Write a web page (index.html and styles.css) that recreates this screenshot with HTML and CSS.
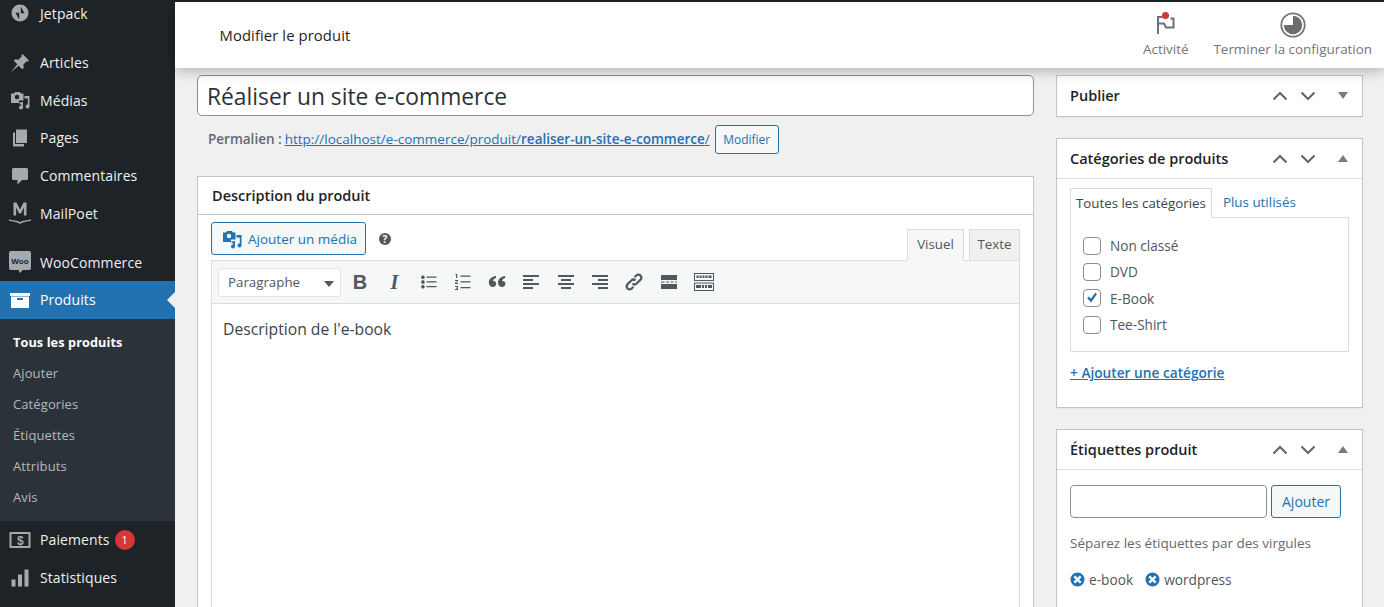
FILE: index.html
```html
<!DOCTYPE html>
<html lang="fr">
<head>
<meta charset="utf-8">
<title>Modifier le produit</title>
<link rel="stylesheet" href="styles.css">
</head>
<body>
<div class="app">
<aside class="sidebar">
  <nav class="menu first-group">
    <a class="item item-first"><svg class="ic" viewBox="0 0 20 20"><path fill-rule="evenodd" d="M10 1.500a8.500 8.500 0 1 0 0 17 8.500 8.500 0 0 0 0-17zM10.800 3.500v6.800h3.700zM9.200 16.500V9.700H5.500z"/></svg><span>Jetpack</span></a>
  </nav>
  <nav class="menu">
    <a class="item"><svg class="ic" viewBox="0 0 20 20"><path d="M12.500 1L19 7.500 17.700 8.700 16.700 8.200 13.300 11.400 13.800 14.800 12.300 16.200 8.700 12.700.8 19.200 7.300 11.300 3.800 7.700 5.200 6.200 8.600 6.800 11.800 3.300 11.300 2.300z"/></svg><span>Articles</span></a>
    <a class="item"><svg class="ic" viewBox="0 0 20 20"><path fill-rule="evenodd" d="M1 3.500h3L5 2h5l1 1.500h2.500v7H9V13H1zM7 4.800a2.200 2.200 0 1 0 0 4.400 2.200 2.200 0 0 0 0-4.400z"/><path d="M14.500 6h5v10.500a2 2 0 1 1-1.700-2V8.500h-3.300zM9.500 12.500l3.500-.5v5.500a2 2 0 1 1-1.700-2v-1.200H9.500z"/></svg><span>Médias</span></a>
    <a class="item"><svg class="ic" viewBox="0 0 20 20"><path d="M6 1.500h11v13.500H6z"/><path d="M3 4.500h2V16h9v2.500H3z"/></svg><span>Pages</span></a>
    <a class="item"><svg class="ic" viewBox="0 0 20 20"><path d="M3.500 2h13a1.500 1.500 0 0 1 1.500 1.500v9a1.500 1.500 0 0 1-1.500 1.500H12l-4.500 4.500V14H3.500A1.500 1.500 0 0 1 2 12.500v-9A1.500 1.500 0 0 1 3.500 2z"/></svg><span>Commentaires</span></a>
    <a class="item"><svg class="ic ic-mp" viewBox="0 0 22 24"><path d="M4.500 1.500h3l3.500 7 3.500-7h3v13h-2.600V6.500l-3 6h-1.800l-3-6v8H4.500z"/><path d="M0 18.500c4 .8 7.500 1 9.500 1.800l1.500 1 1.500-1c2-.8 5.500-1 9.500-1.800v1.300c-3.500 1-7 1.200-9 2l-2 1.200-2-1.200c-2-.8-5.500-1-9-2z"/></svg><span>MailPoet</span></a>
  </nav>
  <nav class="menu group-woo">
    <a class="item item-woo"><svg class="ic ic-woo" viewBox="0 0 22 24"><path d="M2 1h18a2 2 0 0 1 2 2v15a2 2 0 0 1-2 2h-6l-3.500 3-.8-3H2a2 2 0 0 1-2-2V3a2 2 0 0 1 2-2z"/><text x="11" y="14" class="woo-t">Woo</text></svg><span>WooCommerce</span></a>
    <a class="item current"><svg class="ic" viewBox="0 0 20 20"><path fill-rule="evenodd" d="M0 3h20v3H0zM1 6.500h18V18H1zM7 8v2h6V8z"/></svg><span>Produits</span></a>
    <div class="submenu">
      <a class="sub active">Tous les produits</a>
      <a class="sub">Ajouter</a>
      <a class="sub">Catégories</a>
      <a class="sub">Étiquettes</a>
      <a class="sub">Attributs</a>
      <a class="sub">Avis</a>
    </div>
    <a class="item"><svg class="ic ic-pay" viewBox="0 0 22 18"><path fill-rule="evenodd" d="M1.500 1h19a1 1 0 0 1 1 1v14a1 1 0 0 1-1 1h-19a1 1 0 0 1-1-1V2a1 1 0 0 1 1-1zM2.500 3v12h17V3z"/><text x="11.500" y="13.500" class="pay-t">$</text></svg><span>Paiements</span><b class="count">1</b></a>
    <a class="item"><svg class="ic" viewBox="0 0 20 20"><path d="M1.500 11.500h4v7h-4zM8 6.500h4v12H8zM14.500 1.500h4v17h-4z"/></svg><span>Statistiques</span></a>
  </nav>
</aside>

<div class="main">
  <div class="topstrip"></div>
  <header class="topbar">
    <h1 class="page-title">Modifier le produit</h1>
    <div class="top-actions">
      <div class="top-action">
        <span class="flag"><svg viewBox="0 0 20 26" width="20" height="26"><path class="flag-p" d="M2 22V5H6.500M2 11.500h6l2 4h7.500V6.500h-3"/></svg><i class="flag-dot"></i></span>
        <span class="top-label">Activité</span>
      </div>
      <div class="top-action">
        <svg viewBox="0 0 26 26" width="26" height="26"><circle cx="13" cy="13" r="11.700" fill="none" stroke="#757575" stroke-width="1.800"/><path d="M13 13V3.800A9.200 9.200 0 1 1 3.800 13z" fill="#6c6c72"/></svg>
        <span class="top-label">Terminer la configuration</span>
      </div>
    </div>
  </header>

  <div class="content">
    <div class="col-main">
      <div class="title-input">Réaliser un site e-commerce</div>
      <div class="permalink">
        <strong class="perma-label">Permalien :</strong>
        <a class="perma-link">http://localhost/e-commerce/produit/<b>realiser-un-site-e-commerce</b>/</a>
        <span class="btn-small">Modifier</span>
      </div>
      <section class="box box-desc">
        <h2 class="box-title desc-title">Description du produit</h2>
        <div class="editor">
          <div class="editor-tools">
            <div class="btn-media"><svg viewBox="0 0 20 20" width="20" height="20"><path fill-rule="evenodd" d="M1 3.500h3L5 2h5l1 1.500h2.500v7H9V13H1zM7 4.800a2.200 2.200 0 1 0 0 4.400 2.200 2.200 0 0 0 0-4.400z"/><path d="M14.500 6h5v10.500a2 2 0 1 1-1.700-2V8.500h-3.300zM9.500 12.500l3.500-.5v5.500a2 2 0 1 1-1.700-2v-1.200H9.500z"/></svg><span>Ajouter un média</span></div>
            <span class="help">?</span>
            <div class="tabs"><span class="tab tab-on">Visuel</span><span class="tab">Texte</span></div>
          </div>
          <div class="toolbar">
            <div class="select">Paragraphe<i class="caret"></i></div>
            <div class="tb-icons">
              <span class="tb tb-b">B</span>
              <span class="tb tb-i">I</span>
              <svg class="tb-svg" viewBox="0 0 20 20"><path d="M3.500 3.500a1.800 1.800 0 1 1 0 3.500 1.800 1.800 0 0 1 0-3.500zM3.500 8.300a1.800 1.800 0 1 1 0 3.500 1.800 1.800 0 0 1 0-3.500zM3.500 13a1.800 1.800 0 1 1 0 3.500 1.800 1.800 0 0 1 0-3.500zM7.500 4.500h10v1.300h-10zM7.500 9.300h10v1.300h-10zM7.500 14h10v1.300h-10z"/></svg>
              <svg class="tb-svg" viewBox="0 0 20 20"><path d="M3 2h1.200v4H3V3H2zM7.500 3.500h10v1.200h-10zM7.500 9.300h10v1.200h-10zM7.500 15h10v1.200h-10zM2 8h3v1l-2 2h2v1H2v-1l2-2H2zM2 14h3v4H2v-1h2v-.5H3v-.7h1V15H2z"/></svg>
              <svg class="tb-svg" viewBox="0 0 20 20"><path d="M9 4v2c-2.200.7-3 1.900-3 3 1.800-.3 3.200.8 3.200 2.700 0 1.900-1.400 3.300-3.400 3.300C3.500 15 1.800 13 1.800 10.500 1.800 7.300 4.500 4.500 9 4zM18.200 4v2c-2.200.7-3 1.900-3 3 1.800-.3 3.200.8 3.200 2.700 0 1.900-1.400 3.300-3.400 3.300-2.300 0-4-2-4-4.500 0-3.200 2.700-6 7.200-6.500z"/></svg>
              <svg class="tb-svg" viewBox="0 0 20 20"><path d="M2 3h16v2H2zM2 7h10v2H2zM2 11h16v2H2zM2 15h10v2H2z"/></svg>
              <svg class="tb-svg" viewBox="0 0 20 20"><path d="M2 3h16v2H2zM5 7h10v2H5zM2 11h16v2H2zM5 15h10v2H5z"/></svg>
              <svg class="tb-svg" viewBox="0 0 20 20"><path d="M2 3h16v2H2zM8 7h10v2H8zM2 11h16v2H2zM8 15h10v2H8z"/></svg>
              <svg class="tb-svg" viewBox="0 0 20 20"><path fill="none" stroke="#50575e" stroke-width="2.200" d="M8.500 11.500a3 3 0 0 0 4.200 0l4-4a3 3 0 0 0-4.200-4.200l-2 2M11.500 8.500a3 3 0 0 0-4.200 0l-4 4a3 3 0 0 0 4.200 4.200l2-2"/></svg>
              <svg class="tb-svg" viewBox="0 0 20 20"><path d="M2 3h16v5H2zM2 12h16v5H2zM2 9.400h3.500v1.200H2zM7 9.400h3v1.200H7zM11.500 9.400h3v1.200h-3zM16 9.400h2v1.200h-2z"/></svg>
              <svg class="tb-svg tb-kb" viewBox="0 0 22 20"><path fill-rule="evenodd" d="M1 1h20v8H1zM2 2v6h18V2zM1 10.500h20V19H1zM2 11.500V18h18v-6.500z"/><path d="M3.500 3.500h2V6h-2zM6.500 3.500h2V6h-2zM9.500 3.500h2V6h-2zM12.500 3.500h2V6h-2zM15.500 3.500h3V6h-3zM3 13h5v3H3zM9 13h2v3H9zM12 13h2v3h-2zM15 13h4v3h-4z"/></svg>
            </div>
          </div>
          <div class="editor-body">Description de l'e-book</div>
        </div>
      </section>
    </div>

    <div class="col-side">
      <section class="box side-box box-pub">
        <div class="box-head no-line">
          <h2 class="box-title">Publier</h2>
          <div class="handles"><svg viewBox="0 0 16 10" class="chev"><path d="M1.500 8.500L8 2l6.500 6.500"/></svg><svg viewBox="0 0 16 10" class="chev"><path d="M1.500 1.500L8 8l6.500-6.500"/></svg><i class="tri tri-down"></i></div>
        </div>
      </section>
      <section class="box side-box box-cat">
        <div class="box-head">
          <h2 class="box-title">Catégories de produits</h2>
          <div class="handles"><svg viewBox="0 0 16 10" class="chev"><path d="M1.500 8.500L8 2l6.500 6.500"/></svg><svg viewBox="0 0 16 10" class="chev"><path d="M1.500 1.500L8 8l6.500-6.500"/></svg><i class="tri tri-up"></i></div>
        </div>
        <div class="box-body">
          <div class="cat-tabs"><span class="cat-tab on">Toutes les catégories</span><span class="cat-tab link">Plus utilisés</span></div>
          <div class="cat-panel">
            <label class="check"><i class="cb"></i>Non classé</label>
            <label class="check"><i class="cb"></i>DVD</label>
            <label class="check"><i class="cb"><svg viewBox="0 0 16 16"><path d="M3.200 8.200l1.700-1.700 2 2.200 4.300-6 1.800 1.200-5.800 8.600z"/></svg></i>E-Book</label>
            <label class="check"><i class="cb"></i>Tee-Shirt</label>
          </div>
          <a class="add-cat">+ Ajouter une catégorie</a>
        </div>
      </section>
      <section class="box side-box box-tags">
        <div class="box-head">
          <h2 class="box-title">Étiquettes produit</h2>
          <div class="handles"><svg viewBox="0 0 16 10" class="chev"><path d="M1.500 8.500L8 2l6.500 6.500"/></svg><svg viewBox="0 0 16 10" class="chev"><path d="M1.500 1.500L8 8l6.500-6.500"/></svg><i class="tri tri-up"></i></div>
        </div>
        <div class="box-body">
          <div class="tag-add"><div class="tag-input"></div><span class="btn-add">Ajouter</span></div>
          <p class="hint">Séparez les étiquettes par des virgules</p>
          <div class="tags">
            <span class="tag"><svg viewBox="0 0 16 16" width="15" height="15"><path fill-rule="evenodd" d="M8 .5a7.500 7.500 0 1 0 0 15 7.500 7.500 0 0 0 0-15zM5.500 3.700L8 6.200l2.500-2.500 1.800 1.800L9.800 8l2.500 2.500-1.800 1.800L8 9.800l-2.500 2.500-1.800-1.800L6.200 8 3.700 5.500z"/></svg>e-book</span>
            <span class="tag"><svg viewBox="0 0 16 16" width="15" height="15"><path fill-rule="evenodd" d="M8 .5a7.500 7.500 0 1 0 0 15 7.500 7.500 0 0 0 0-15zM5.500 3.700L8 6.200l2.500-2.500 1.800 1.800L9.800 8l2.500 2.500-1.800 1.800L8 9.800l-2.500 2.500-1.800-1.800L6.200 8 3.700 5.500z"/></svg>wordpress</span>
          </div>
        </div>
      </section>
    </div>
  </div>
</div>
</div>
</body>
</html>
```
FILE: styles.css
```css
* { box-sizing: border-box; }
html, body { margin: 0; height: 607px; overflow: hidden; }
body { font-family: "Open Sans", "Noto Sans", sans-serif; font-size: 14px; color: #3c434a; background: #f0f0f1; }
.app { display: flex; height: 607px; overflow: hidden; }
h1, h2, p { margin: 0; font-weight: 400; }

.sidebar { width: 175px; flex: none; background: #1d2327; color: #f0f0f1; display: flex; flex-direction: column; height: 607px; overflow: hidden; }
.menu { display: flex; flex-direction: column; flex: none; }
.first-group { margin-bottom: 12px; }
.group-woo { margin-top: 11px; }
.item { display: flex; align-items: center; height: 37.600px; padding-left: 10px; gap: 10px; font-size: 14px; letter-spacing: 0.1px; position: relative; white-space: nowrap; flex: none; }
.item-first { height: 38px; margin-top: -6px; }
.item-woo { padding-top: 1px; }
.ic { width: 20px; height: 20px; fill: #a7aaad; flex: none; }
.ic-mp { width: 22px; height: 24px; margin-left: -1px; margin-right: -1px; }
.ic-woo { width: 22px; height: 24px; margin-left: -1px; margin-right: -1px; }
.ic-pay { width: 22px; height: 18px; margin-left: -1px; margin-right: -1px; }
.woo-t { font-family: "Liberation Sans", sans-serif; font-size: 8px; font-weight: 700; fill: #1d2327; text-anchor: middle; }
.pay-t { font-family: "Liberation Sans", sans-serif; font-size: 12px; font-weight: 700; fill: #a7aaad; text-anchor: middle; }
.current { background: #2271b1; color: #fff; height: 38px; }
.current .ic { fill: #fff; }
.current::after { content: ""; position: absolute; right: 0; top: 50%; margin-top: -8px; border: 8px solid transparent; border-right-color: #f0f0f1; }
.submenu { background: #2c3338; height: 202px; margin-bottom: .6px; padding-top: 8px; display: flex; flex-direction: column; flex: none; }
.sub { height: 31px; display: flex; align-items: center; padding-left: 13px; font-size: 13px; color: #b4b9be; letter-spacing: 0.1px; flex: none; }
.sub.active { color: #fff; font-weight: 700; font-size: 12.700px; }
.count { display: inline-flex; align-items: center; justify-content: center; width: 20px; height: 20px; margin-left: -5px; border-radius: 50%; background: #d63638; color: #fff; font-size: 11px; font-weight: 400; }

.main { flex: 1; min-width: 0; display: flex; flex-direction: column; }
.topstrip { height: 2px; background: #1d2327; flex: none; }
.topbar { height: 66px; flex: none; background: #fff; display: flex; align-items: center; justify-content: space-between; padding: 0 12px 0 44.500px; box-shadow: 0 3px 12px rgba(0,0,0,.26); position: relative; z-index: 2; }
.page-title { font-size: 14.800px; font-weight: 500; color: #1e1e1e; letter-spacing: 0.1px; }
.top-actions { display: flex; gap: 25px; align-self: flex-start; }
.top-action { display: flex; flex-direction: column; align-items: center; gap: 2px; padding-top: 10px; }
.flag { display: block; position: relative; width: 20px; height: 26px; }
.flag svg { display: block; }
.flag-p { fill: none; stroke: #6c7078; stroke-width: 2; }
.flag-dot { position: absolute; left: 6.500px; top: -.5px; width: 7px; height: 7px; border-radius: 50%; background: #d63638; }
.top-label { font-size: 13.400px; line-height: 18px; color: #757575; white-space: nowrap; }

.content { flex: 1; display: flex; padding: 7px 21px 0 22px; gap: 22px; min-height: 0; }
.col-main { width: 837px; flex: none; display: flex; flex-direction: column; }
.col-side { width: 307px; flex: none; display: flex; flex-direction: column; gap: 21px; }
.title-input { height: 41px; flex: none; background: #fff; border: 1px solid #8c8f94; border-radius: 5px; padding: 2px 9px 0; display: flex; align-items: center; font-size: 22.800px; color: #2c3338; }
.permalink { height: 60px; flex: none; padding: 9px 0 0 11px; display: flex; align-items: flex-start; gap: 3px; font-size: 13.500px; color: #646970; }
.perma-label { font-weight: 600; line-height: 29px; }
.perma-link { color: #2271b1; text-decoration: underline; line-height: 29px; margin-right: 2px; }
.perma-link b { font-weight: 600; }
.btn-small { height: 29px; width: 64px; display: inline-flex; align-items: center; justify-content: center; border: 1px solid #2271b1; border-radius: 3px; background: #f6f7f7; color: #2271b1; font-size: 12px; }
.box { background: #fff; border: 1px solid #c3c4c7; box-shadow: 0 1px 1px rgba(0,0,0,.04); }
.box-desc { flex: 1; min-height: 0; border-bottom: 0; overflow: hidden; }
.box-title { font-size: 14.500px; font-weight: 600; color: #1d2327; white-space: nowrap; }
.desc-title { height: 38px; display: flex; align-items: center; padding-left: 14px; border-bottom: 1px solid #c3c4c7; }
.editor { margin: 7px 13px 0; }
.editor-tools { height: 38px; display: flex; align-items: flex-start; }
.btn-media { height: 33px; width: 155px; display: flex; align-items: center; gap: 6px; padding: 1px 0 0 10px; border: 1px solid #2271b1; border-radius: 3px; background: #f6f7f7; color: #2271b1; font-size: 13.500px; }
.btn-media svg { fill: #2271b1; flex: none; }
.help { width: 12px; height: 12px; margin: 11px 0 0 13px; border-radius: 50%; background: #50575e; color: #fff; font-size: 10px; font-weight: 700; line-height: 12px; text-align: center; }
.tabs { margin-left: auto; display: flex; gap: 5px; padding-top: 7px; position: relative; z-index: 1; }
.tab { height: 32px; width: 51px; justify-content: center; display: flex; align-items: center; padding-bottom: 2px; background: #f0f0f1; border: 1px solid #dcdcde; color: #50575e; font-size: 13.300px; }
.tab-on { background: #f6f7f7; border-bottom-color: #f6f7f7; width: 57px; }
.toolbar { height: 44px; background: #f6f7f7; border: 1px solid #dcdcde; display: flex; align-items: center; padding-left: 6px; }
.select { width: 123px; height: 29px; background: #fff; border: 1px solid #e4e4e6; border-radius: 3px; padding-left: 9px; display: flex; align-items: center; position: relative; font-size: 13.300px; color: #50575e; }
.caret { position: absolute; right: 6px; top: 12px; border: 5px solid transparent; border-top: 6px solid #50575e; border-bottom: 0; }
.tb-icons { display: flex; align-items: center; margin-left: 9px; gap: 14.300px; }
.tb { width: 20px; text-align: center; color: #50575e; font-family: "Liberation Sans", sans-serif; font-size: 20px; line-height: 20px; }
.tb-b { font-weight: 700; }
.tb-i { font-style: italic; font-weight: 700; font-family: "Liberation Serif", serif; }
.tb-svg { width: 20px; height: 20px; fill: #50575e; flex: none; }
.tb-kb { width: 22px; }
.editor-body { height: 400px; background: #fff; border-left: 1px solid #dcdcde; border-right: 1px solid #dcdcde; padding: 14px 11px; font-size: 15.700px; color: #3c434a; }

.box-head { height: 40px; display: flex; align-items: center; justify-content: space-between; padding: 0 14.500px 0 13px; border-bottom: 1px solid #dcdcde; }
.no-line { border-bottom: 0; height: 39px; }
.handles { display: flex; align-items: center; gap: 12px; }
.chev { width: 16px; height: 10px; fill: none; stroke: #646970; stroke-width: 2.200; }
.tri { display: block; border: 5.500px solid transparent; margin-left: 9.500px; }
.tri-down { border-top: 7px solid #787c82; border-bottom: 0; }
.tri-up { border-bottom: 7px solid #787c82; border-top: 0; }
.box-body { padding: 9px 13px 0; }
.box-pub { height: 42px; flex: none; }
.box-cat { height: 270px; flex: none; }
.box-tags { flex: 1; min-height: 0; border-bottom: 0; overflow: hidden; }
.cat-tabs { display: flex; height: 29px; position: relative; z-index: 1; }
.cat-tab { padding: 0 5px 2px; display: flex; align-items: center; font-size: 13.300px; }
.cat-tab.on { border: 1px solid #dcdcde; border-bottom: 0; background: #fff; height: 30px; color: #3c434a; }
.cat-tab.link { color: #2271b1; padding-left: 11px; font-size: 13.400px; }
.cat-panel { height: 135px; border: 1px solid #dcdcde; padding: 19px 12px 0; display: flex; flex-direction: column; gap: 9px; }
.check { display: flex; align-items: center; gap: 9px; height: 17.300px; font-size: 13.600px; color: #50575e; flex: none; }
.cb { width: 18px; height: 18px; flex: none; border: 1px solid #8c8f94; border-radius: 4px; background: #fff; display: block; }
.cb svg { display: block; width: 16px; height: 16px; fill: #2271b1; }
.add-cat { display: block; margin-top: 11px; color: #2271b1; font-size: 13.700px; font-weight: 600; text-decoration: underline; }
.tag-add { display: flex; gap: 4px; padding-top: 6px; }
.tag-input { width: 197px; height: 33px; background: #fff; border: 1px solid #8c8f94; border-radius: 4px; }
.btn-add { width: 70px; height: 33px; display: flex; align-items: center; justify-content: center; background: #f6f7f7; border: 1px solid #2271b1; border-radius: 3px; color: #2271b1; font-size: 14px; }
.hint { margin-top: 16px; font-size: 13.500px; color: #646970; }
.tags { display: flex; gap: 12px; margin-top: 18px; }
.tag { display: flex; align-items: center; gap: 4px; font-size: 13.700px; color: #50575e; }
.tag svg { fill: #2271b1; flex: none; }
```
